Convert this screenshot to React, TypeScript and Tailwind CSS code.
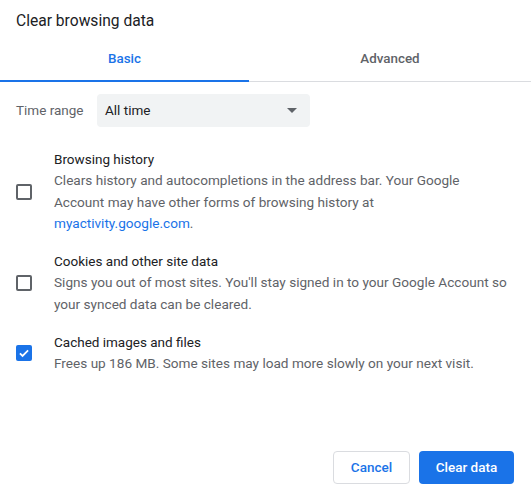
import { useState } from "react";

const items = [
  {
    id: "history",
    title: "Browsing history",
    lines: [
      <>Clears history and autocompletions in the address bar. Your Google</>,
      <>Account may have other forms of browsing history at</>,
      <>
        <span className="text-[#1a73e8]">myactivity.google.com</span>.
      </>,
    ],
  },
  {
    id: "cookies",
    title: "Cookies and other site data",
    lines: [
      <>Signs you out of most sites. You'll stay signed in to your Google Account so</>,
      <>your synced data can be cleared.</>,
    ],
  },
  {
    id: "cache",
    title: "Cached images and files",
    lines: [<>Frees up 186 MB. Some sites may load more slowly on your next visit.</>],
  },
];

function Checkbox({ checked, onClick }: { checked: boolean; onClick: () => void }) {
  if (checked) {
    return (
      <button onClick={onClick} className="flex h-4 w-4 shrink-0 items-center justify-center rounded-[2px] bg-[#1a73e8]">
        <svg viewBox="0 0 24 24" className="h-[14px] w-[14px]" fill="none" stroke="white" strokeWidth="3">
          <path d="M5 12.5l4.5 4.5L19 7.5" />
        </svg>
      </button>
    );
  }
  return <button onClick={onClick} className="h-4 w-4 shrink-0 rounded-[2px] border-2 border-[#5f6368]" />;
}

export default function App() {
  const [tab, setTab] = useState("basic");
  const [checked, setChecked] = useState<Record<string, boolean>>({ cache: true });

  return (
    <div className="h-[500px] w-[531px] bg-white font-['Roboto',sans-serif] text-[13px] text-[#202124]">
      <div className="px-4 pt-[11px] text-[15.6px] leading-5">Clear browsing data</div>

      <div className="mt-[7px] flex border-b border-[#dadce0]">
        <button
          onClick={() => setTab("basic")}
          className={`-mb-px flex h-[44px] w-[249px] items-center justify-center border-b-2 text-[13.4px] font-medium ${
            tab === "basic" ? "border-[#1a73e8] text-[#1a73e8]" : "border-transparent text-[#5f6368]"
          }`}
        >
          Basic
        </button>
        <button
          onClick={() => setTab("advanced")}
          className={`-mb-px flex h-[44px] flex-1 items-center justify-center border-b-2 text-[13.4px] font-medium ${
            tab === "advanced" ? "border-[#1a73e8] text-[#1a73e8]" : "border-transparent text-[#5f6368]"
          }`}
        >
          Advanced
        </button>
      </div>

      <div className="mt-[12px] flex items-center px-4 text-[13.5px]">
        <span className="w-[81px] text-[#5f6368]">Time range</span>
        <div className="flex h-[33px] w-[213px] items-center justify-between rounded bg-[#f1f3f4] pl-[8px] pr-[13px]">
          <span>All time</span>
          <svg viewBox="0 0 10 5" className="h-[5px] w-[10px]">
            <path d="M0 0h10L5 5z" fill="#5f6368" />
          </svg>
        </div>
      </div>

      <div className="mt-[22px] flex flex-col gap-[17px]">
        {items.map((it) => (
          <div key={it.id} className="flex items-center pl-4">
            <Checkbox
              checked={!!checked[it.id]}
              onClick={() => setChecked((c) => ({ ...c, [it.id]: !c[it.id] }))}
            />
            <div className="ml-[22px] whitespace-nowrap leading-[21.3px]">
              <div className="text-[13.5px]">{it.title}</div>
              {it.lines.map((l, i) => (
                <div key={i} className="text-[13.6px] text-[#5f6368]">
                  {l}
                </div>
              ))}
            </div>
          </div>
        ))}
      </div>

      <div className="mt-[76px] flex justify-end gap-[9px] pr-[17px]">
        <button className="h-[33px] w-[77px] rounded border border-[#dadce0] text-[13.5px] font-medium text-[#1a73e8]">
          Cancel
        </button>
        <button className="h-[33px] w-[95px] rounded bg-[#1a73e8] text-[13.5px] font-medium text-white">Clear data</button>
      </div>
    </div>
  );
}
